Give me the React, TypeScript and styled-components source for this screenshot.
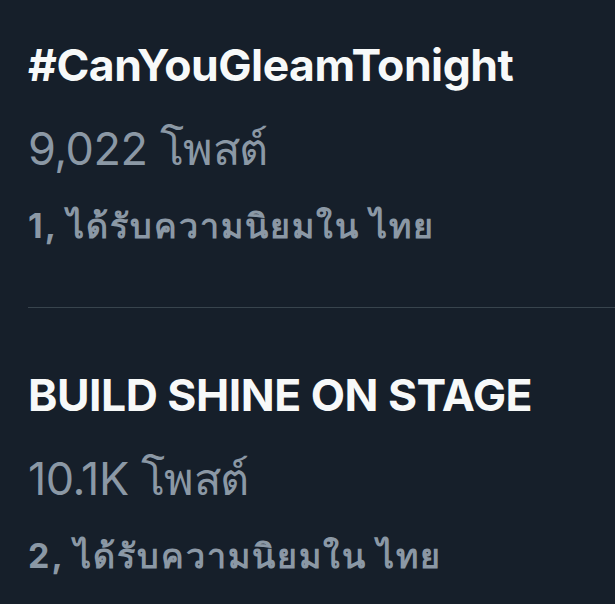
import React from 'react';
import styled, { createGlobalStyle } from 'styled-components';

const GlobalStyle = createGlobalStyle`
  html, body {
    margin: 0;
    padding: 0;
    background: #161f2a;
  }
  body {
    font-family: Inter, "Liberation Sans", "Noto Sans", sans-serif;
  }
`

const Page = styled.div`
  width: 615px;
  height: 604px;
  overflow: hidden;
  background: #161f2a;
  padding-top: 40px;
  box-sizing: border-box;
`
const Trend = styled.div<{ $top: number; $bottom: number }>`
  display: flex;
  flex-direction: column;
  padding: ${p => p.$top}px 0 ${p => p.$bottom}px 28px;
`
const Title = styled.div`
  font-size: 44.5px;
  line-height: 50px;
  font-weight: 700;
  letter-spacing: -0.5px;
  color: #f7f9f9;
  white-space: nowrap;
`
const Posts = styled.div`
  margin-top: 34px;
  font-size: 45px;
  line-height: 50px;
  font-weight: 400;
  letter-spacing: -0.5px;
  color: #8b98a5;
  white-space: nowrap;
`
const Rank = styled.div`
  margin-top: 32px;
  font-size: 34px;
  line-height: 40px;
  font-weight: 700;
  letter-spacing: 2px;
  color: #8b98a5;
  white-space: nowrap;
`
const Divider = styled.div`
  height: 1px;
  margin-left: 28px;
  background: #38444d;
`

const trends = [
  { title: '#CanYouGleamTonight', posts: '9,022 โพสต์', rank: '1' },
  { title: 'BUILD SHINE ON STAGE', posts: '10.1K โพสต์', rank: '2' },
];

function App() {
  return (
    <>
      <GlobalStyle />
      <Page>
        {trends.map((t, i) => (
          <React.Fragment key={t.title}>
            {i > 0 && <Divider />}
            <Trend $top={i === 0 ? 0 : 62} $bottom={61}>
              <Title>{t.title}</Title>
              <Posts>{t.posts}</Posts>
              <Rank>{t.rank}, ได้รับความนิยมใน ไทย</Rank>
            </Trend>
          </React.Fragment>
        ))}
      </Page>
    </>
  );
}

export default App;
